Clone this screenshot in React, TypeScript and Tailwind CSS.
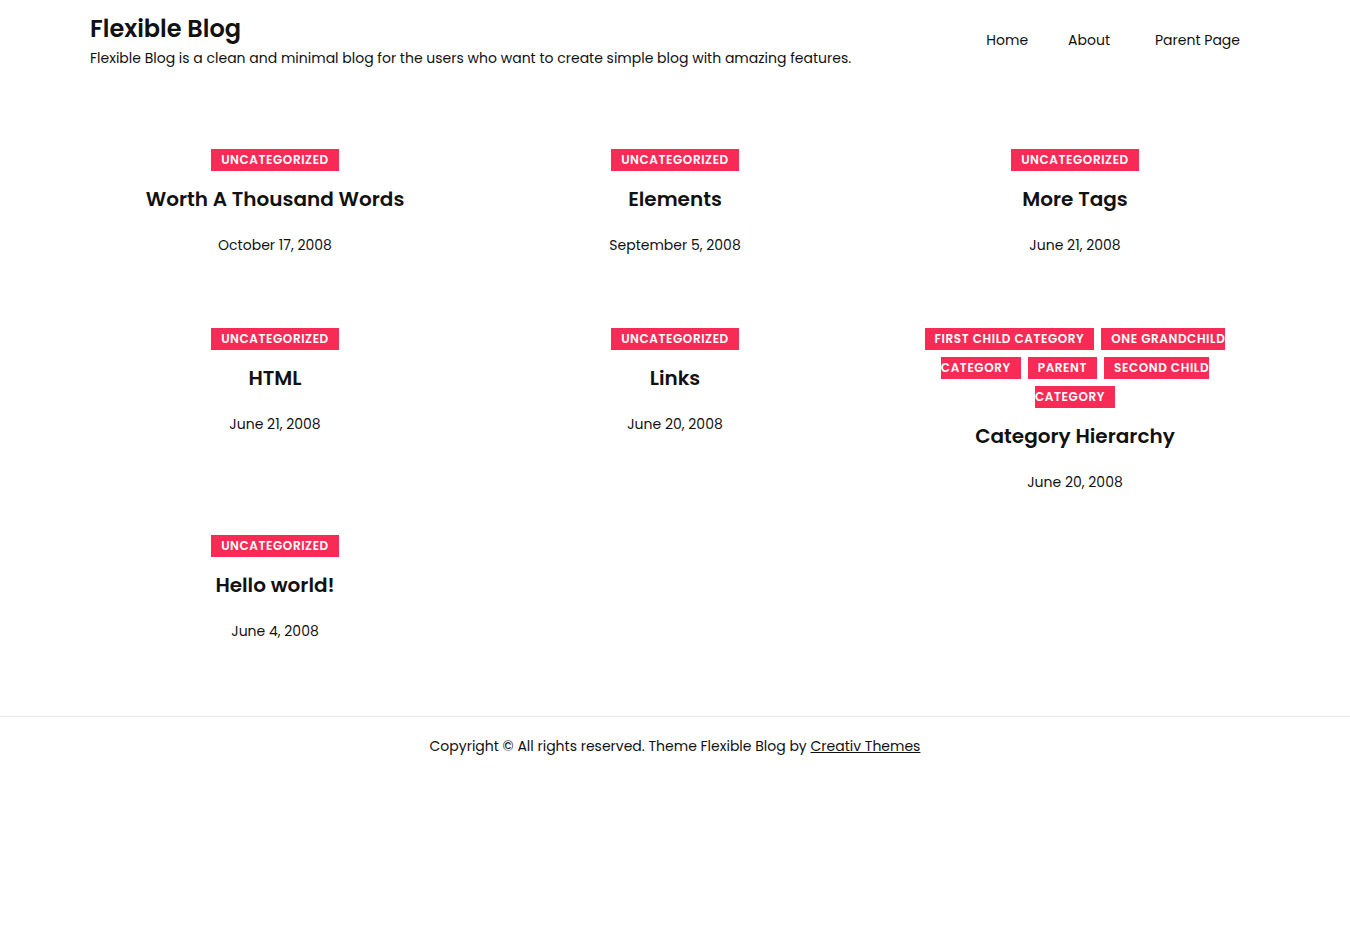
import type { ReactNode } from "react";

type Post = {
  title: string;
  date: string;
  tags?: ReactNode;
};

const Tag = ({ children, className = "" }: { children: ReactNode; className?: string }) => (
  <span
    className={`inline-block bg-[#f72b56] text-white text-[12px] font-semibold uppercase tracking-[0.6px] leading-[22px] px-[10px] ${className}`}
  >
    {children}
  </span>
);

const hierarchyTags = (
  <div className="flex flex-col items-center gap-[7px]">
    <div className="flex gap-[7px]">
      <Tag>First Child Category</Tag>
      <Tag className="pr-0">One Grandchild</Tag>
    </div>
    <div className="flex gap-[7px]">
      <Tag className="pl-0">Category</Tag>
      <Tag>Parent</Tag>
      <Tag className="pr-0">Second Child</Tag>
    </div>
    <div className="flex">
      <Tag className="pl-0">Category</Tag>
    </div>
  </div>
);

const posts: Post[] = [
  { title: "Worth A Thousand Words", date: "October 17, 2008" },
  { title: "Elements", date: "September 5, 2008" },
  { title: "More Tags", date: "June 21, 2008" },
  { title: "HTML", date: "June 21, 2008" },
  { title: "Links", date: "June 20, 2008" },
  { title: "Category Hierarchy", date: "June 20, 2008", tags: hierarchyTags },
  { title: "Hello world!", date: "June 4, 2008" },
];

const PostCard = ({ post }: { post: Post }) => (
  <article className="min-h-[136px] flex flex-col items-center text-center px-4">
    {post.tags ?? <Tag>Uncategorized</Tag>}
    <h2 className="mt-[15px] text-[20px] font-semibold leading-[26px] text-[#111]">{post.title}</h2>
    <p className="mt-[23px] text-[14px] leading-[20px] text-[#111]">{post.date}</p>
  </article>
);

export default function App() {
  return (
    <div className="min-h-screen bg-white text-[#111] font-['Poppins','Open_Sans',sans-serif]">
      <header className="max-w-[1200px] mx-auto px-4 pt-[13px] flex justify-between items-start">
        <div className="-ml-px">
          <h1 className="text-[24px] font-semibold leading-[32px]">Flexible Blog</h1>
          <p className="text-[14px] leading-[22px] mt-[2px]">
            Flexible Blog is a clean and minimal blog for the users who want to create simple blog with amazing features.
          </p>
        </div>
        <nav className="flex items-center text-[14px] pt-[17px] pr-[19px]">
          <a className="px-5">Home</a>
          <a className="px-5">About</a>
          <a className="pl-[25px]">Parent Page</a>
        </nav>
      </header>

      <main className="max-w-[1200px] mx-auto pt-[80px] grid grid-cols-3 gap-y-[43px]">
        {posts.map((p) => (
          <PostCard key={p.title} post={p} />
        ))}
      </main>

      <footer className="mt-[45px] border-t border-[#e6e6e6] pt-[19px] pb-[20px] text-center text-[14px]">
        Copyright © All rights reserved. Theme Flexible Blog by{" "}
        <a className="underline">Creativ Themes</a>
      </footer>
    </div>
  );
}
